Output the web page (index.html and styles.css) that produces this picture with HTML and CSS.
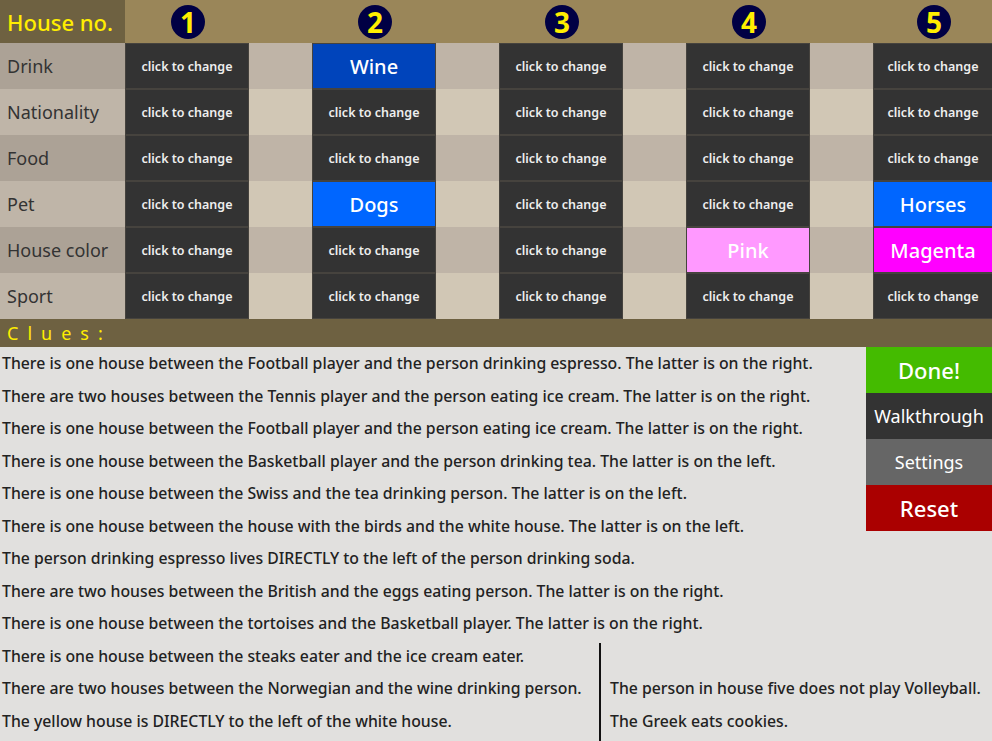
FILE: index.html
```html
<!DOCTYPE html>
<html lang="en">
<head>
  <meta charset="UTF-8" />
  <title>Einstein Puzzle</title>
  <link rel="stylesheet" href="styles.css">
</head>
<body>
  <div class="board">
    <div class="head-label">House no.</div>
    <div class="head-num"><span class="num">1</span></div>
    <div class="head-gap"></div>
    <div class="head-num"><span class="num">2</span></div>
    <div class="head-gap"></div>
    <div class="head-num"><span class="num">3</span></div>
    <div class="head-gap"></div>
    <div class="head-num"><span class="num">4</span></div>
    <div class="head-gap"></div>
    <div class="head-num"><span class="num">5</span></div>

    <div class="label dark">Drink</div>
    <div class="cell">click to change</div><div class="gap dark"></div>
    <div class="cell set wine">Wine</div><div class="gap dark"></div>
    <div class="cell">click to change</div><div class="gap dark"></div>
    <div class="cell">click to change</div><div class="gap dark"></div>
    <div class="cell">click to change</div>

    <div class="label">Nationality</div>
    <div class="cell">click to change</div><div class="gap"></div>
    <div class="cell">click to change</div><div class="gap"></div>
    <div class="cell">click to change</div><div class="gap"></div>
    <div class="cell">click to change</div><div class="gap"></div>
    <div class="cell">click to change</div>

    <div class="label dark">Food</div>
    <div class="cell">click to change</div><div class="gap dark"></div>
    <div class="cell">click to change</div><div class="gap dark"></div>
    <div class="cell">click to change</div><div class="gap dark"></div>
    <div class="cell">click to change</div><div class="gap dark"></div>
    <div class="cell">click to change</div>

    <div class="label">Pet</div>
    <div class="cell">click to change</div><div class="gap"></div>
    <div class="cell set blue">Dogs</div><div class="gap"></div>
    <div class="cell">click to change</div><div class="gap"></div>
    <div class="cell">click to change</div><div class="gap"></div>
    <div class="cell set blue">Horses</div>

    <div class="label dark">House color</div>
    <div class="cell">click to change</div><div class="gap dark"></div>
    <div class="cell">click to change</div><div class="gap dark"></div>
    <div class="cell">click to change</div><div class="gap dark"></div>
    <div class="cell set pink">Pink</div><div class="gap dark"></div>
    <div class="cell set magenta">Magenta</div>

    <div class="label">Sport</div>
    <div class="cell">click to change</div><div class="gap"></div>
    <div class="cell">click to change</div><div class="gap"></div>
    <div class="cell">click to change</div><div class="gap"></div>
    <div class="cell">click to change</div><div class="gap"></div>
    <div class="cell">click to change</div>
  </div>

  <div class="clues-bar">Clues:</div>

  <div class="clues">
    <ul class="clue-list">
      <li>There is one house between the Football player and the person drinking espresso. The latter is on the right.</li>
      <li>There are two houses between the Tennis player and the person eating ice cream. The latter is on the right.</li>
      <li>There is one house between the Football player and the person eating ice cream. The latter is on the right.</li>
      <li>There is one house between the Basketball player and the person drinking tea. The latter is on the left.</li>
      <li>There is one house between the Swiss and the tea drinking person. The latter is on the left.</li>
      <li>There is one house between the house with the birds and the white house. The latter is on the left.</li>
      <li>The person drinking espresso lives DIRECTLY to the left of the person drinking soda.</li>
      <li>There are two houses between the British and the eggs eating person. The latter is on the right.</li>
      <li>There is one house between the tortoises and the Basketball player. The latter is on the right.</li>
    </ul>
    <div class="buttons">
      <button class="btn done">Done!</button>
      <button class="btn walk">Walkthrough</button>
      <button class="btn settings">Settings</button>
      <button class="btn reset">Reset</button>
    </div>
  </div>

  <div class="clues-split">
    <ul class="clue-list">
      <li>There is one house between the steaks eater and the ice cream eater.</li>
      <li>There are two houses between the Norwegian and the wine drinking person.</li>
      <li>The yellow house is DIRECTLY to the left of the white house.</li>
    </ul>
    <ul class="clue-list side">
      <li>The person in house five does not play Volleyball.</li>
      <li>The Greek eats cookies.</li>
    </ul>
  </div>
</body>
</html>
```

FILE: styles.css
```css
:root {
  --header: #9a8659;
  --header-dark: #6e6141;
  --label-dark: #aca296;
  --label-light: #bfb5a8;
  --gap-dark: #bfb4a7;
  --gap-light: #d1c7b5;
  --cell: #333333;
  --page: #e1e0de;
}

body {
  margin: 0;
  width: 992px;
  height: 741px;
  overflow: hidden;
  display: flex;
  flex-direction: column;
  background-color: var(--page);
  font-family: "Noto Sans", sans-serif;
  color: #222;
}

.board {
  display: grid;
  grid-template-columns: 125px repeat(4, 124px 63px) 120px;
  grid-template-rows: 43px repeat(6, 46px);
}

.head-label {
  background-color: var(--header-dark);
  color: #ffee00;
  font-size: 22px;
  font-weight: 500;
  display: flex;
  align-items: center;
  padding-left: 7px;
}

.head-num,
.head-gap {
  background-color: var(--header);
}

.head-num {
  display: flex;
  align-items: center;
  justify-content: center;
}

.num {
  width: 34px;
  height: 34px;
  border-radius: 50%;
  background-color: #000044;
  color: #ffee00;
  font-weight: bold;
  font-size: 28px;
  line-height: 1;
  display: flex;
  align-items: center;
  justify-content: center;
  margin-left: 2px;
}

.label {
  background-color: var(--label-light);
  color: #333;
  font-size: 18px;
  display: flex;
  align-items: center;
  padding-left: 7px;
}

.label.dark {
  background-color: var(--label-dark);
}

.gap {
  background-color: var(--gap-light);
}

.gap.dark {
  background-color: var(--gap-dark);
}

.cell {
  background-color: var(--cell);
  color: #eee;
  font-size: 12.5px;
  font-weight: 600;
  display: flex;
  align-items: center;
  justify-content: center;
  box-shadow: inset 0 0 0 1px #46433e;
  cursor: pointer;
}

.cell.set {
  font-size: 20px;
  font-weight: 500;
  color: #fff;
}

.wine { background-color: #0044bb; }
.blue { background-color: #0066ff; }
.pink { background-color: #ff99ff; }
.magenta { background-color: #ff00ff; }

.clues-bar {
  background-color: var(--header-dark);
  color: #ffee00;
  height: 28px;
  line-height: 28px;
  font-size: 18px;
  letter-spacing: 9px;
  padding-left: 7px;
}

.clues {
  display: flex;
  justify-content: space-between;
}

.clue-list {
  list-style: none;
  margin: 0;
  padding: 0 0 0 2px;
  font-size: 15.8px;
  font-weight: 500;
  line-height: 32.5px;
}

.buttons {
  width: 126px;
  display: flex;
  flex-direction: column;
  align-self: flex-start;
}

.btn {
  height: 46px;
  border: none;
  color: #fff;
  font-family: inherit;
  font-size: 18px;
  cursor: pointer;
}

.done { background-color: #44bb00; font-size: 22px; font-weight: 500; }
.walk { background-color: #333; }
.settings { background-color: #666; }
.reset { background-color: #aa0000; font-size: 22px; font-weight: 500; }

.clues-split {
  flex: 1;
  display: grid;
  grid-template-columns: 599px 1fr;
}

.clue-list.side {
  border-left: 2px solid #111;
  margin-top: 3px;
  padding: 29.5px 0 0 9px;
}
```
